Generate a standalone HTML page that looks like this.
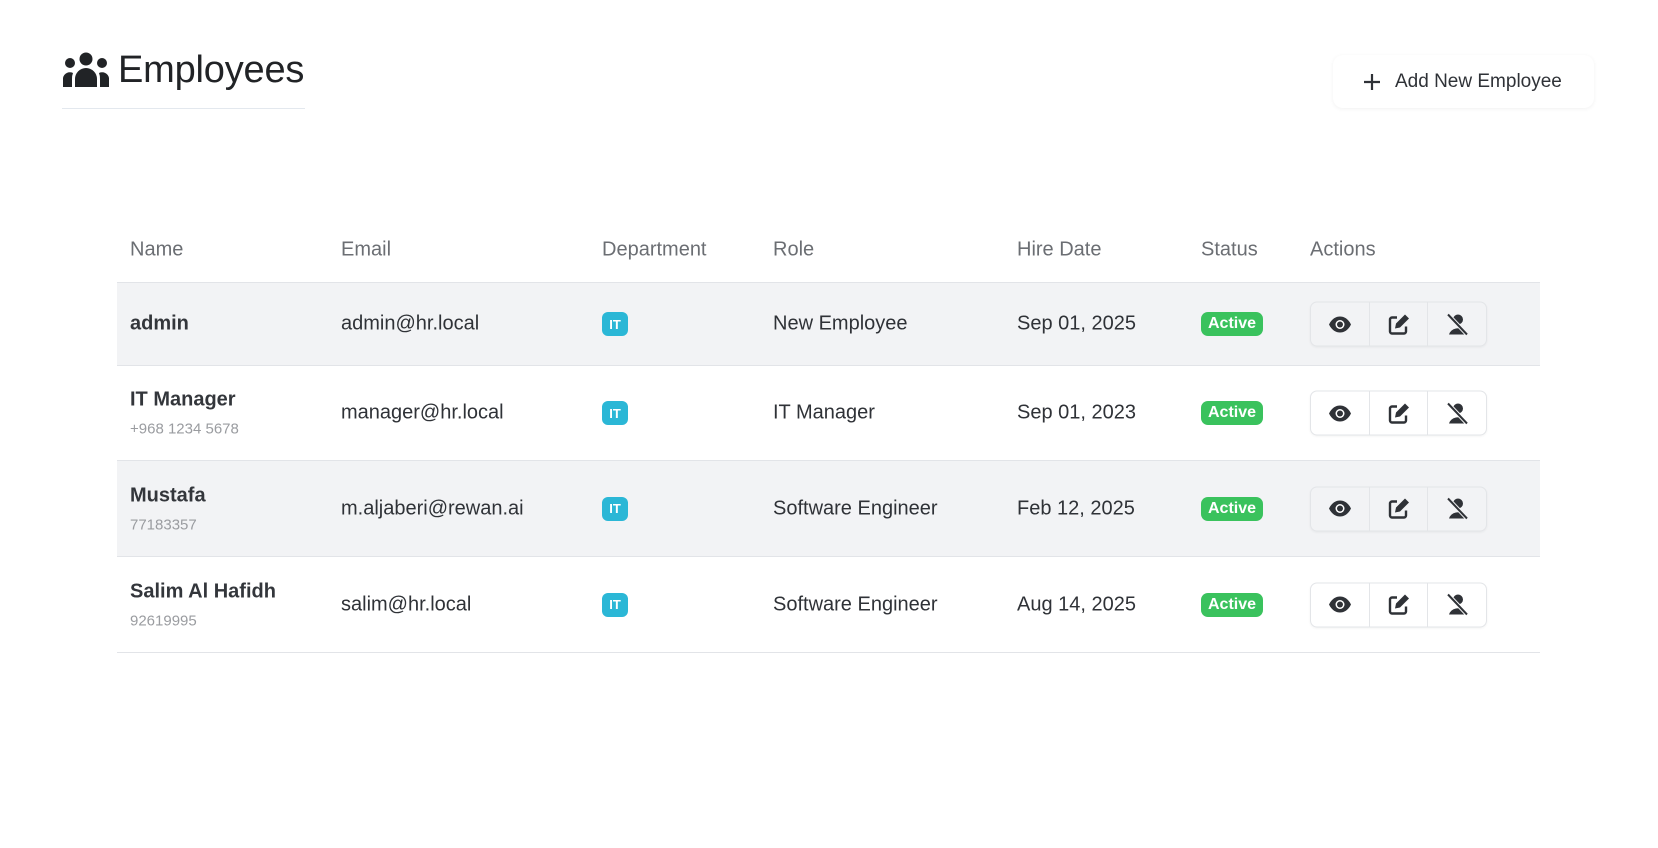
<!DOCTYPE html>
<html><head><meta charset="utf-8"><style>
*{box-sizing:border-box;margin:0;padding:0}
body{width:1658px;height:848px;background:#fff;font-family:"Liberation Sans",sans-serif;color:#2f3237;position:relative;overflow:hidden}
.title{position:absolute;left:62px;top:44px;height:52px;display:flex;align-items:center;font-size:38px;color:#212326;letter-spacing:-0.2px}
.title svg{margin-right:8px}
.uline{position:absolute;left:62px;top:108px;width:243px;height:1px;background:#e3e8ee}
.btn{position:absolute;left:1333px;top:55px;width:261px;height:53px;border-radius:10px;background:#fff;box-shadow:0 1px 4px rgba(0,0,0,.06);display:flex;align-items:center;font-size:19px;color:#2f3237}
.btn .plus{margin-left:30px;margin-right:14px}
.row{position:absolute;left:117px;width:1423px;border-bottom:1px solid #e2e4e8}
.c{position:absolute;top:50%;transform:translateY(-50%);font-size:20px;white-space:nowrap}
.hdr .c{color:#6b6e73}
.sub{font-size:15px;color:#9a9ca0;margin-top:9px}
.b{font-weight:bold;color:#33363b}
.it{width:26px;height:24px;border-radius:6px;background:#2bb7d6;color:#fff;font-size:13px;font-weight:bold;display:flex;align-items:center;justify-content:center}
.act{width:62px;height:24px;border-radius:7px;background:#3ac25d;color:#fff;font-size:16px;font-weight:bold;display:flex;align-items:center;justify-content:center}
.grp{display:flex;width:177px;height:45px;border:1px solid #e3e5e8;border-radius:7px;box-shadow:0 1px 2px rgba(0,0,0,.05)}
.grp div{flex:1;display:flex;align-items:center;justify-content:center;border-right:1px solid #e3e5e8}
.grp div:last-child{border-right:none}
</style></head><body>
<div class="title"><svg width="48" height="36" viewBox="0 0 48 36"><circle cx="24" cy="7" r="6.5" fill="#212326"/><circle cx="8" cy="11" r="5" fill="#212326"/><circle cx="40" cy="11" r="5" fill="#212326"/><path d="M13 35 V27 a11 11 0 0 1 22 0 V35Z" fill="#212326"/><path d="M1 35 V26 a7 7 0 0 1 10 -5 a14 14 0 0 0 -1 6 V35Z" fill="#212326"/><path d="M47 35 V26 a7 7 0 0 0 -10 -5 a14 14 0 0 1 1 6 V35Z" fill="#212326"/></svg>Employees</div>
<div class="uline"></div>
<div class="btn"><svg class="plus" width="18" height="18" viewBox="0 0 18 18"><path d="M9 1V17M1 9H17" stroke="#2f3237" stroke-width="2.2"/></svg>Add New Employee</div>

<div class="row hdr" style="top:217px;height:66px">
<span class="c" style="left:13px">Name</span><span class="c" style="left:224px">Email</span><span class="c" style="left:485px">Department</span><span class="c" style="left:656px">Role</span><span class="c" style="left:900px">Hire Date</span><span class="c" style="left:1084px">Status</span><span class="c" style="left:1193px">Actions</span>
</div>

<div class="row" style="top:283px;height:83px;background:#f2f3f5">
<div class="c b" style="left:13px">admin</div><span class="c" style="left:224px">admin@hr.local</span><div class="c it" style="left:485px">IT</div><span class="c" style="left:656px">New Employee</span><span class="c" style="left:900px">Sep 01, 2025</span><div class="c act" style="left:1084px">Active</div>
<div class="c grp" style="left:1193px"><div><svg width="24" height="18" viewBox="0 0 24 18"><path d="M1 9C4 3 8 1 12 1s8 2 11 8c-3 6-7 8-11 8S4 15 1 9Z" fill="#2f3237"/><circle cx="12" cy="9" r="4.5" fill="#fff"/><circle cx="12" cy="9" r="3" fill="#2f3237"/></svg></div><div><svg width="22" height="22" viewBox="0 0 22 22"><path d="M9 4H4a2 2 0 0 0-2 2v12a2 2 0 0 0 2 2h12a2 2 0 0 0 2-2v-5" fill="none" stroke="#2f3237" stroke-width="2.4"/><path d="M17 1l4 4-9 9-5 1 1-5Z" fill="#2f3237"/></svg></div><div><svg width="24" height="22" viewBox="0 0 24 22"><circle cx="13" cy="6" r="5" fill="#2f3237"/><path d="M4 21a9 8 0 0 1 16-3v3Z" fill="#2f3237"/><path d="M3 1L22 21" stroke="#f2f3f5" stroke-width="4"/><path d="M3 1L22 21" stroke="#2f3237" stroke-width="2"/></svg></div></div>
</div>

<div class="row" style="top:366px;height:95px">
<div class="c" style="left:13px"><div class="b">IT Manager</div><div class="sub">+968 1234 5678</div></div><span class="c" style="left:224px">manager@hr.local</span><div class="c it" style="left:485px">IT</div><span class="c" style="left:656px">IT Manager</span><span class="c" style="left:900px">Sep 01, 2023</span><div class="c act" style="left:1084px">Active</div>
<div class="c grp" style="left:1193px"><div><svg width="24" height="18" viewBox="0 0 24 18"><path d="M1 9C4 3 8 1 12 1s8 2 11 8c-3 6-7 8-11 8S4 15 1 9Z" fill="#2f3237"/><circle cx="12" cy="9" r="4.5" fill="#fff"/><circle cx="12" cy="9" r="3" fill="#2f3237"/></svg></div><div><svg width="22" height="22" viewBox="0 0 22 22"><path d="M9 4H4a2 2 0 0 0-2 2v12a2 2 0 0 0 2 2h12a2 2 0 0 0 2-2v-5" fill="none" stroke="#2f3237" stroke-width="2.4"/><path d="M17 1l4 4-9 9-5 1 1-5Z" fill="#2f3237"/></svg></div><div><svg width="24" height="22" viewBox="0 0 24 22"><circle cx="13" cy="6" r="5" fill="#2f3237"/><path d="M4 21a9 8 0 0 1 16-3v3Z" fill="#2f3237"/><path d="M3 1L22 21" stroke="#fff" stroke-width="4"/><path d="M3 1L22 21" stroke="#2f3237" stroke-width="2"/></svg></div></div>
</div>

<div class="row" style="top:461px;height:96px;background:#f2f3f5">
<div class="c" style="left:13px"><div class="b">Mustafa</div><div class="sub">77183357</div></div><span class="c" style="left:224px">m.aljaberi@rewan.ai</span><div class="c it" style="left:485px">IT</div><span class="c" style="left:656px">Software Engineer</span><span class="c" style="left:900px">Feb 12, 2025</span><div class="c act" style="left:1084px">Active</div>
<div class="c grp" style="left:1193px"><div><svg width="24" height="18" viewBox="0 0 24 18"><path d="M1 9C4 3 8 1 12 1s8 2 11 8c-3 6-7 8-11 8S4 15 1 9Z" fill="#2f3237"/><circle cx="12" cy="9" r="4.5" fill="#fff"/><circle cx="12" cy="9" r="3" fill="#2f3237"/></svg></div><div><svg width="22" height="22" viewBox="0 0 22 22"><path d="M9 4H4a2 2 0 0 0-2 2v12a2 2 0 0 0 2 2h12a2 2 0 0 0 2-2v-5" fill="none" stroke="#2f3237" stroke-width="2.4"/><path d="M17 1l4 4-9 9-5 1 1-5Z" fill="#2f3237"/></svg></div><div><svg width="24" height="22" viewBox="0 0 24 22"><circle cx="13" cy="6" r="5" fill="#2f3237"/><path d="M4 21a9 8 0 0 1 16-3v3Z" fill="#2f3237"/><path d="M3 1L22 21" stroke="#f2f3f5" stroke-width="4"/><path d="M3 1L22 21" stroke="#2f3237" stroke-width="2"/></svg></div></div>
</div>

<div class="row" style="top:557px;height:96px">
<div class="c" style="left:13px"><div class="b">Salim Al Hafidh</div><div class="sub">92619995</div></div><span class="c" style="left:224px">salim@hr.local</span><div class="c it" style="left:485px">IT</div><span class="c" style="left:656px">Software Engineer</span><span class="c" style="left:900px">Aug 14, 2025</span><div class="c act" style="left:1084px">Active</div>
<div class="c grp" style="left:1193px"><div><svg width="24" height="18" viewBox="0 0 24 18"><path d="M1 9C4 3 8 1 12 1s8 2 11 8c-3 6-7 8-11 8S4 15 1 9Z" fill="#2f3237"/><circle cx="12" cy="9" r="4.5" fill="#fff"/><circle cx="12" cy="9" r="3" fill="#2f3237"/></svg></div><div><svg width="22" height="22" viewBox="0 0 22 22"><path d="M9 4H4a2 2 0 0 0-2 2v12a2 2 0 0 0 2 2h12a2 2 0 0 0 2-2v-5" fill="none" stroke="#2f3237" stroke-width="2.4"/><path d="M17 1l4 4-9 9-5 1 1-5Z" fill="#2f3237"/></svg></div><div><svg width="24" height="22" viewBox="0 0 24 22"><circle cx="13" cy="6" r="5" fill="#2f3237"/><path d="M4 21a9 8 0 0 1 16-3v3Z" fill="#2f3237"/><path d="M3 1L22 21" stroke="#fff" stroke-width="4"/><path d="M3 1L22 21" stroke="#2f3237" stroke-width="2"/></svg></div></div>
</div>
</body></html>
